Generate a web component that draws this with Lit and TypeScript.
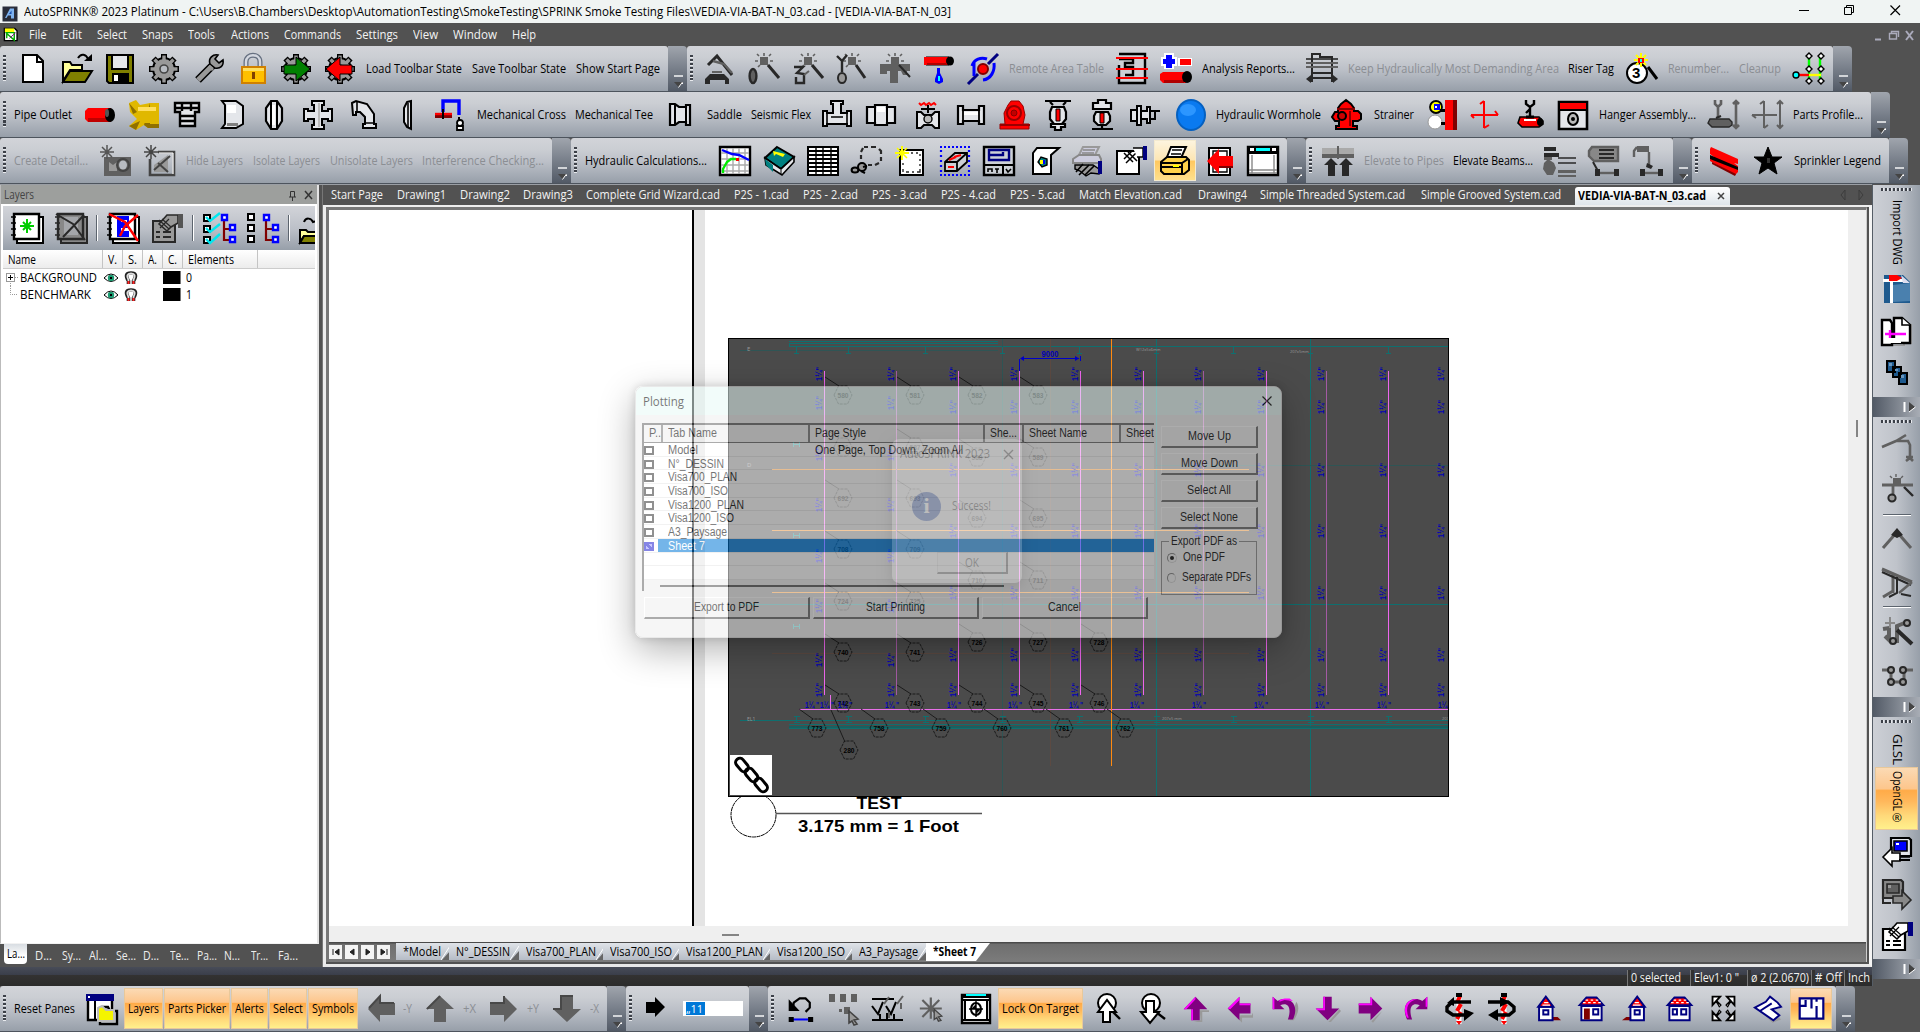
import { LitElement, html, svg, css } from "lit";
import { customElement } from "lit/decorators.js";

const COLORS: Record<string, string> = {
  n: "none", k: "#000", w: "#fff", g: "#808080", s: "#999", r: "#f00", b: "#00f",
  N: "#000080", m: "#800000", p: "#800080", M: "#f0f", y: "#ff0", o: "#808000",
  c: "#0ff", t: "#008080", G: "#008000", d: "#606060", D: "#282828", e: "#e4e6ea",
};
const col = (s: string) => COLORS[s] ?? s;

const GEAR = "n k 6 M16 1V31M1 16H31M5.5 5.5L26.5 26.5M26.5 5.5L5.5 26.5|s k 2 o 16 16 11 11|n s 3.4 M16 2.5V29.5M2.5 16H29.5M6.5 6.5L25.5 25.5M25.5 6.5L6.5 25.5|s n 0 o 16 16 9.6 9.6|#b8bcc2 #444 1.6 o 16 16 4 4";
const BURST = (x: number, y: number, c: string) => `n ${c} 1.5 M${x} ${y - 7}V${y + 7}M${x - 7} ${y}H${x + 7}M${x - 5} ${y - 5}L${x + 5} ${y + 5}M${x + 5} ${y - 5}L${x - 5} ${y + 5}`;
const SUN = "d n 0 M12 4H20V12H12Z|n d 1.6 M16 0V3M9 1L11 3M23 1L21 3M7 8H10M22 8H25M10 14L12 12M20 12L22 14";

// Each glyph is a list of "fill stroke width geometry" shapes on a 32-unit grid.
const ICONS: Record<string, string> = {
  new: "w k 2 M6 2H20L26 8V29H6Z|n k 2 M20 2V9H26",
  open: "#ff9 k 2 M2 9H9L11 12H21V17H9L2 28Z|o k 2 M9 18H31L24 29H2Z|n k 2 M17 5C20 0 25 1 27 6|k n 0 M23 8H31V1Z",
  save: "o k 2 M3 2H29V30H5L3 28Z|e k 2 M8 2H24V16H8Z|k n 0 M8 20H25V30H8Z|w n 0 M10 22H14V28H10Z",
  gear: GEAR,
  wrench: "n k 8 M5 27L20 12|n s 5 M5 27L20 12|s k 1.6 M17 11C15 5 20 1 25 2L22 6L26 10L30 7C31 13 27 16 22 15Z|s n 0 M17 12L21 16L19 18L15 14Z",
  lock: "n #667080 5 M9 16V9C9 0 23 0 23 9V16|n #d4d8e0 2.4 M9 16V9C9 0 23 0 23 9V16|#ffc000 #d08000 2 M5 14H28V30H5Z|#ffe060 n 0 M6 15H27V18H6Z|#804000 n 0 M15 19H18V26H15Z",
  gearG: GEAR + "|G k 1 M4 12H16V4L30 16L16 28V21H4Z",
  gearR: GEAR + "|r k 1 M28 12H16V4L2 16L16 28V21H28Z",
  arm: "n D 3 M4 12L13 3L28 22|n d 2.4 M9 8L20 11L28 20|D n 0 M1 31V26L6 21H20L25 26V31H21V27H6V31Z|d n 0 M8 20V18H18V20Z",
  wand1: SUN + "|n D 3 M20 12L31 25|d D 2.4 o 5 23 3.4 7",
  wand2: SUN + "|n D 3 M20 12L31 25|n D 2.4 M2 14H11L5 20L12 21V30H4V24|n d 2 M12 22L17 18",
  wand3: SUN + "|n D 3 M20 12L29 25|n D 2.4 M1 3L6 8V19M6 8L11 2|s D 2 o 6 25 4 5",
  wand4: SUN + "|d n 0 M1 11H31V18H28V22H24L22 18H19V30H11V18H8V21H1Z|n D 2 M20 12L31 24",
  pipedrop: "r k 1 M3 4H26V12H3Z|r n 0 M1 4H26V12H1Z|k n 0 o 27 8 4 4.5|#b00000 n 0 M4 10H24V12H4Z|b n 0 M14 15H17V20L20 26V29L16 31L12 29V26L14 20Z|c n 0 M15 23H17V28H15Z",
  nodeblue: "n N 3 M1 31L11 21M21 11L31 1|n b 3 M5 13C7 6 14 4 20 6M27 10C28 18 24 26 16 27M7 9V23|r m 2 o 16 16 5 5",
  sheet: "#ccd0d6 k 2.4 M3 1H29V30H3V12M3 6H17V10H9V14H17V22H9|n r 2 M0 5H32M0 16H32M0 25H32",
  analysis: "w n 0 M4 0H14V4H17V13H14V16H4V13H1V4H4Z|b n 0 M6 2H12V6H15V11H12V15H6V11H3V6H6Z|w n 0 M18 5H32V13H18Z|r n 0 M20 6H31V12H20Z|r n 0 M3 19H26V30H3L0 27V21Z|#b00000 n 0 M4 27H24V30H4Z|k n 0 o 27 24 5 6",
  frame: "n D 2 M6 29V1H14V4H26V29M6 20H26M3 25H29|n D 1.6 M0 6H32|n d 2 M0 10H32M0 14H32|D n 0 M0 26L5 22V30ZM32 26L27 22V30Z",
  tag3: "w k 2 o 11 20 10 10|k n 1 t 6 25 15 3|n k 3 M22 14L31 26|n y 2 M15 0V14M8 7H22M10 2L20 12M20 2L10 12|r n 0 M12 5H18V10H12Z|c n 0 M14 6H16V9H14Z",
  tree: "n #0f0 2.4 M16 4V26M27 4V26|n y 2.4 M16 22H28|n r 2.4 M4 22H16|c k 1.4 o 3 22 3 3|w k 1.4 M16 0L19 3L16 6L13 3ZM28 0L31 3L28 6L25 3ZM16 13L19 16L16 19L13 16ZM28 13L31 16L28 19L25 16ZM16 25L19 28L16 31L13 28ZM28 25L31 28L28 31L25 28Z",

  pipe: "r n 0 M4 9H27V23H4L1 20V12Z|#c00000 n 0 M4 19H27V23H4Z|k n 0 o 26 16 5 7|#555 n 0 o 23 14 2 4",
  brass: "#e0b800 n 0 M1 4L8 1L12 6L22 4H31V29H20L16 26L8 31L1 27L9 20L2 13Z|#907000 n 0 M22 4L16 26L20 29H31V25H22ZM1 4L9 13L5 15ZM1 27L12 22L8 31Z|#e0b800 n 0 M14 9H30V24H14Z|#ffdf60 n 0 M10 8H28V12H10Z",
  plug: "e k 2.4 M4 4H28V13H24V27H9V13H4Z|n k 2.4 M4 9H28M11 4V12M20 4V12M9 17H24M9 22H24",
  cap: "e k 2 M6 2H20L27 7V25L20 29H6L9 25V6Z|w n 0 M11 6H20V14H11Z|g n 0 M11 24H22V27H11Z",
  union: "e k 2.2 M13 2H19L24 9V22L19 30H13L8 22V9Z|n k 2 M13 3V29M19 3V29|w n 0 M14 6H17V26H14Z",
  cross: "e k 2 M10 2H22V6H20V12H26V10H30V22H26V20H20V26H22V30H10V26H12V20H6V22H2V10H6V12H12V6H10Z|n #bbb 2 M17 4V28",
  elbow: "e k 2 M5 4L9 2L20 5L27 15V25H29V29H16V25H18V18L13 13H9V16H6Z|n k 1.6 M10 3V13M17 24H27",
  cap2: "e k 2 M17 3L21 2V30L17 28L14 23V9Z|n k 1.6 M18 4V28",
  loop: "n b 3.4 M9 13V2H25V16|n m 4 M1 17H18|n r 2.4 M1 15H18|n k 2 M9 10V20M25 18V21|w k 1.8 o 26 24 3 3|w k 1.8 M23 27H29V31H23Z",
  reducer: "e k 2.2 M5 5H10L14 8H21V6H25V26H21V23H14L10 26H5Z|n k 2 M10 5V26M21 8V23",
  teeM: "e k 2 M10 2H22V5H20V14H26V12H30V27H26V25H6V27H2V12H6V14H12V5H10Z|n k 1.6 M6 14V25M26 14V25M10 18H22",
  coupling: "e k 2.2 M2 8H10V6H22V8H30V24H22V26H10V24H2Z|n k 2 M10 8V24M22 8V24|w n 0 M12 8H20V13H12Z",
  valve: "n r 2 M7 4L9 6L12 4L14 6L17 4L19 6L22 4L24 6|n k 2 M16 6V14|e k 2 M5 13H9L12 16H20L23 13H27V29H23L20 26H12L9 29H5Z|#bbb k 1.4 o 16 20 4 4|k n 0 M9 9H23V11H9Z",
  spool: "e k 2.2 M3 7H8V11H24V7H29V25H24V22H8V25H3Z|n k 1.8 M8 8V24M24 8V24|w n 0 M9 13H23V16H9Z",
  pump: "r #900 1 M9 6L12 2H20L24 7L26 16L24 25H30V30H1V25H6L5 14Z|n #900 2 o 15 14 7 7|#c00000 #800 1 o 15 14 3 3|n #900 2 M1 26H31",
  sprUp: "n k 2.2 M3 2H29M8 3L11 6M24 3L21 6|e k 2.2 M10 8H22L24 13V20L20 25H12L8 20V13Z|r k 1 M14 10H18V22H14Z|e k 2.2 M9 25H23V28H19V31H13V28H9Z",
  sprDn: "n k 2.2 M6 30H27M16 25V30|e k 2.2 M10 13H22L24 17V22L20 26H12L8 22V17Z|r k 1 M14 14H18V24H14Z|e k 2.2 M12 1H20V4H25V10H7V4H12Z",
  sprSide: "e k 2 M2 11H8V7H12V26H8V22H2Z|e k 2 M12 12H18V8H21V24H18V20H12Z|n k 2 M8 12V21M21 12H31M21 20H26V12",
  ball: "#0a7af0 #0560c0 2 o 16 16 14 15|#2c96ff n 0 o 13 11 8 6",
  hydrant: "r k 2 M11 5L16 1L21 5L24 9V12H28L31 15V20L28 22H23V27H27V30H6V27H9V22H5L2 18L5 13H8V9Z|n #800 2 M7 10H25M20 12V27|#c00 k 2 o 12 17 4 4",
  strainer: "r n 0 M18 1H26V31H18Z|m n 0 M26 1H30V31H26Z|y k 1.8 o 9 8 6 6|b n 0 M7 5H13V11H7Z|w n 0 M8 7H10V9H8Z|w s 1 o 8 23 7 7|k n 0 M13 10H18V13H13ZM14 23H18V26H14Z",
  redx: "n r 2 M16 2V29M3 16H30M16 2L12 5M16 29L21 26M3 16L6 19M30 16L27 12",
  hanger: "n k 2.4 M12 1V5L16 8L20 5V1M16 8V18M16 10L12 14|r k 1.6 M6 18H25L29 22V25L25 28H8L4 24Z|w n 0 M10 20H22V22H10Z|k n 0 o 26 23 3 4|n k 3 M12 18H20",
  seismic: "e k 2.6 M2 3H30V30H2Z|r n 0 M3 4H29V10H3Z|n k 2 M3 11H29|#bbb k 2 o 16 20 5 6|k n 0 o 16 20 2 2",
  hangerG: "n d 2.6 M8 1V5L11 8L14 5V1M11 8V19M29 2V29M26 5L29 2L32 5M26 26L29 29L32 26|d D 1.4 M3 20H22L25 23V26L22 28H5L1 24Z|n D 2 M9 19L14 17",
  crossG: "n d 2 M13 2V29M1 16H26M13 2L9 5M13 29L17 26M1 16L5 19M29 2V29M26 5L29 2L32 5M26 26L29 29L32 26",

  detail: "d n 0 M4 12H31V31H4Z|s n 0 M9 17L13 20L17 17V26H9Z|d #444 2 o 23 20 6 6|#b8bcc2 n 0 o 23 20 4 4.5|" + BURST(7, 7, "#555"),
  detail2: "n #444 2.6 M14 7H30V30H6V14|n w 1.2 M15 8H29M29 8V29|s n 0 M10 20L24 10V27H10Z|n #444 2 M10 25L26 11M14 18L24 27|n #444 1.2 M6 14V30H30|" + BURST(7, 7, "#444"),
  chart: "w k 2.4 M1 2H31V30H1Z|n #aaa 1.4 M2 8H30M2 14H30M2 20H30M2 26H30M8 3V29M14 3V29M20 3V29M26 3V29|n b 2.4 M3 5L13 9L20 10L30 15|n #0e0 2.4 M4 28V24L8 17L12 14H17|r n 0 M17 13H20V16H17Z",
  book: "t k 2 M14 2L31 12L18 24L2 13Z|e k 1.6 M2 13L18 24L31 12V17L19 30L3 20Z|t n 0 M2 14L10 20V27L3 20Z|y n 0 M10 6L22 9L20 12L13 9L11 11Z|n k 1 M18 25V29",
  table: "w k 2 M1 2H31V30H1Z|n k 2 M1 6H31M1 10H31M1 14H31M1 18H31M1 22H31M1 26H31|n k 1.4 M9 2V30M16 2V30M24 2V30",
  dashsel: "n D 2.2 M13 2H17M20 2H25M28 4L30 6V9M30 12V16M28 18L24 20M21 20H17M10 14V10M10 7L12 3|s k 2 o 11 22 4 4|s k 2 o 4 25 3.4 2.6|n k 2 M10 26L14 28|n k 2 M12 22L16 21",
  newpage: "w k 2 M6 5H29V30H6Z|n D 1.4 M12 8H14M17 8H19M22 8H24M26 9V11M26 14V16M26 19V21M26 24V27H23M20 27H18M15 27H12M9 27V24M9 20V18|" + BURST(8, 8, "#ff0") + "|n y 2 M1 8H15M8 1V15",
  pdfsel: "n b 2.2 M1 2H3M5 2H7M9 2H11M13 2H15M17 2H19M21 2H23M25 2H27M29 2H31M1 30H3M5 30H7M9 30H11M13 30H15M17 30H19M21 30H23M25 30H27M29 30H31M2 5V7M2 10V12M2 15V17M2 20V22M2 25V27M30 5V7M30 10V12M30 15V17M30 20V22M30 25V27|#ccd0d6 k 1.8 M6 17L16 8H28V17L18 26H6ZM6 17H18L28 8M18 17V26|n r 2 M10 15L17 12M15 12L22 10M9 22H15",
  panel: "#ccd0d6 k 2.4 M1 2H31V30H1Z|n N 2.4 M26 5V15H6V5ZM6 10H20V7|n k 2 M1 20H31M20 20V30|n k 1.6 M5 27V24H9V27M12 24H16M14 24V28M23 24L25 27L28 24",
  pageeye: "w k 2 M6 29V8L10 3H32L24 10V29Z|t k 1.4 M11 17L14 12L20 14V20L15 22Z|y n 0 M13 15H16V19H13Z|b n 0 M16 15H18V19H16Z",
  printhand: "#ccd s 2 M8 10L12 2H28L24 10|#ccd #888 2 M2 14L8 10H28L30 14V18H2Z|n #888 1.6 M12 5H24M11 8H23|s k 1.4 M4 20H22L28 24V29L20 28L15 31L9 26L4 24Z|n k 1.6 M5 27L12 19M8 30L18 20M14 30L23 21|N n 0 M27 16H31V29H27Z",
  props: "w k 2 M2 6H24V29H2Z|n k 1.5 M9 8L18 17M13 7L22 16M9 14L17 6M11 18L21 8|w k 1.4 M18 3H28V12H22|N n 0 M28 1H32V15H28Z",
  printer: "w k 2 M8 12L12 2H27L22 13|n k 1.6 M13 5H23M12 9H22|#ffd24a k 2 M2 17L8 12H27L30 15V25L25 29H5L2 26Z|n k 2 M2 18H23L29 14M23 18V28M3 22H23|y n 0 M14 20H20V22H14Z",
  pageR: "w k 2 M4 3H25V30H4Z|n k 1.4 M8 6H22V27H8Z|r n 0 M2 16L14 4V11H28V22H14V29Z|n m 2 M14 22H28",
  windowc: "w k 2.4 M1 2H31V30H1Z|k n 0 M1 2H31V9H1Z|c n 0 M9 3H23V6H9Z|w n 0 M3 3H7V6H3ZM25 3H29V6H25Z|n #888 1.4 M5 10V29M27 10V29M2 25H30M2 28H30",
  elevate: "#aaa n 0 M0 3H32V9H0Z|d n 0 M0 9H32V13H0ZM15 1H17V14H15Z|D n 0 M9 13L16 20H13V31H6V20H2ZM24 13L31 20H27V31H20V20H17Z",
  legend1: "D n 0 M0 2H12V6H0ZM0 8H15V12H0Z|d n 0 M0 12H8V15H0ZM0 18L4 14L10 18L12 23L9 30H3L-1 24ZM14 25H32V28H14ZM14 30H32V32H14Z|n D 1.6 M14 13H32M14 18H32",
  legend2: "#888 d 2.4 M4 2H30V16H6L1 11V6Z|n D 2 M11 5H26M11 9H26M11 13H26M5 17L10 26|n d 2.4 M8 28H30|D n 0 M7 24H12V31H7ZM26 24H31V31H26Z",
  legend3: "d n 0 M4 1H16V7H4Z|n d 2.4 M4 2L1 6V12M16 7V20|D n 0 M14 18L20 21L18 24L13 22Z|n d 2.4 M9 28H29|D n 0 M7 24H12V31H7ZM25 24H30V31H25Z",
  beam: "r n 0 M3 2L30 14V19L26 18L30 21V27L27 30L2 16V12L6 12L2 9V4Z|k n 0 M2 10L30 22V25L2 14Z|m n 0 M4 17L28 29L27 31L4 19Z",
  star: "k k 1 M16 2L20 12H30L22 18L25 29L16 23L7 29L10 18L2 12H12Z|#333 n 0 M15 13H18V18H15Z",

  panes: "w k 2.4 M2 5H26V27H2Z|N n 0 M0 1H28V8H0Z|w n 0 M2 3H4V5H2Z|n k 2 M9 8V27|#ccd0d6 k 2.4 M14 17L17 14H22L24 18H31V31H14Z|#f4f400 #bbb 2 M12 15L16 13L20 17H28V28H12Z",
  gL: "d n 0 M3 16L15 3V10H30V22H15V29Z|n #484848 2 M4 15L15 3V10H29", gU: "d n 0 M16 3L30 16H22V29H10V16H2Z|n #484848 2 M3 16L16 3", gR: "d n 0 M29 16L16 29V22H2V10H16V3Z|n #484848 2 M2 10H16V3", gD: "d n 0 M16 29L2 16H10V3H22V16H30Z|n #484848 2 M2 16H10V3H22",
  kR: "k n 0 M7 9H16V4L26 14L16 24V20H7Z",
  undoB: "n k 2.6 M7 17L8 9L15 4H22L27 9V15L22 20|k n 0 M2 5V19H15Z|n b 2.4 M7 29H25|k n 0 M2 26H8V32H2ZM25 26H31V32H25Z",
  selG: "d n 0 M0 1H6V9H0ZM11 1H17V9H11ZM22 1H28V9H22ZM15 14H21V21H15ZM10 16H13V19H10Z|s #444 1.6 M20 18L29 26L25 27L28 31L25 32L23 28L20 30Z",
  checks: "n k 2 M0 6H22M0 27H31M0 13L6 21L11 9M14 13L19 21L24 9M8 21V27M15 20V27M22 21V27|n d 2 M12 11L17 4M25 11L31 3M17 19V25M29 10V16",
  burstG: "n d 2.6 M14 3V28M1 16H27M4 6L24 26M24 6L4 26|s #444 1.6 M18 17L27 25L23 26L26 30L23 31L21 27L18 29Z",
  target: "w k 2.4 M2 2H30V30H2Z|k n 0 M1 1H31V5H1Z|c n 0 M6 1H26V3H6Z|n k 2 M2 7H30M5 7V26M27 7V26M2 27H30|w k 2 o 16 16 5 6|k n 0 M16 11V16H11ZM16 16H21L16 21Z|n k 1.4 M16 8V24M9 16H23",
  zoomU: "n k 2.4 M20 19L27 26|w k 2 o 14 10 9 9|w k 2 M10 29V19H5L14 7L23 19H17V29Z", zoomD: "n k 2.4 M20 19L29 26|w k 2 o 15 10 9 9|w k 2 M10 8H18V19H23L14 30L5 19H10Z",
  pU: "s n 0 M21 18H32V20H24V32H14L22 30Z|p n 0 M16 2L30 17H21V30H11V17H2Z|M n 0 M16 2L2 17H5L16 5ZM11 17H13V30H11Z", pL: "s n 0 M17 24H31V22H32V27H19V33L16 30Z|p n 0 M2 16L16 2V10H29V22H16V30Z|M n 0 M2 16L16 2V6L5 17ZM16 10H29V12H16Z",
  pD: "s n 0 M30 17L17 32L20 32L32 19Z|p n 0 M16 30L2 16H11V2H21V16H30Z|M n 0 M2 16H11V2H13V18H4Z", pR: "s n 0 M17 31L30 19L19 33Z|p n 0 M30 16L16 30V22H2V10H16V2Z|M n 0 M2 10H16V2L18 4V12H2Z",
  pUn: "s n 0 M22 30H27C34 20 33 12 30 8Z|p n 0 M2 2V17H16L11 12C20 8 25 15 20 29L26 29C35 10 20 0 8 7Z|M n 0 M2 2V17H4V4ZM10 6L16 4H22L26 7L16 6L10 8Z", pRe: "p n 0 M30 2V17H16L21 12C12 8 7 15 12 29L6 29C-3 10 12 0 24 7Z|M n 0 M28 4L30 2V14H28ZM6 27C-1 12 8 4 18 5C8 7 3 14 8 27Z",
  orbL: "n w 5 M16 2V31|n r 4 M17 3L14 10M18 11L14 18M18 19L14 26|k n 0 M13 0H19V4H13Z|n k 3.4 M28 9H9L4 14V18L10 22H24|k n 0 M11 4V13L4 10ZM21 16L31 20L21 28Z|r n 0 M13 28H19L16 32Z",
  orbR: "n w 5 M18 2V31|n r 4 M19 3L16 10M20 11L16 18M20 19L16 26|k n 0 M15 0H21V4H15Z|n k 3.4 M2 9H22L28 14V18L23 22H8|k n 0 M14 4L24 9L14 14ZM12 16L2 22L12 28Z|r n 0 M15 28H21L18 32Z",
  houseL: "m n 0 M20 26H28L32 30H20Z|w N 2.3 M6 14H22V30H6Z|r N 2.3 M14 2L23 14H5Z|n w 1.4 M12 9H17M10 12H19|n N 2.3 M11 18H17V23H11Z",
  houseF: "w N 2.3 M4 13H28V30H4Z|r N 2.3 M10 3H22L30 12H2Z|n w 1.6 M9 6H12M15 6H18M21 6H24M6 9H9M12 9H15M18 9H21M24 9H27|m n 0 M7 16H14V29H7Z|n N 2.3 M18 17H24V23H18Z",
  houseR: "m n 0 M10 26H5L0 30H12Z|w N 2.3 M10 14H26V30H10Z|r N 2.3 M18 2L27 14H9Z|n w 1.4 M15 9H20M13 12H22|n N 2.3 M15 18H21V23H15Z",
  houseB: "w N 2.3 M4 13H28V30H4Z|r N 2.3 M10 3H22L30 12H2Z|n w 1.6 M9 6H12M15 6H18M21 6H24M6 9H9M12 9H15M18 9H21M24 9H27|n N 2.3 M8 17H13V23H8ZM18 17H24V23H18Z",
  expand: "n k 3 M5 5L12 12M27 5L20 12M5 27L12 20M27 27L20 20|w k 2.2 M3 2H12L3 12ZM29 2H20L29 12ZM3 30H12L3 20ZM29 30H20L29 20Z|w k 1.4 M8 8L13 12L11 14ZM24 8L19 12L21 14ZM8 24L13 20L11 18ZM24 24L19 20L21 18Z",
  iso: "s n 0 M6 18L22 33L32 29L30 27Z|w N 2.3 M1 15L14 8L19 2L28 9L32 14L21 17L30 24L23 30Z|n N 2.3 M7 19L21 10",
  plan: "w N 2.6 M2 4H30V28H2Z|n N 2.6 M2 13H9V6M16 4V16M22 13V28M22 4V8",

  dwg: "#1f5a8e n 0 M3 2H22L29 9V30H3Z|#4a80ae n 0 M12 12L29 10V28L12 29Z|w n 0 M2 6H24V9H2ZM9 3H12V30H9Z|r n 0 M8 2H16L21 5L16 8H8Z|#dde n 0 M20 2L29 10H22Z",
  pages: "s n 0 M5 30H24V28H31V8H29V27H22V29H5Z|w k 2.4 M1 4H9L11 7V29H1Z|w k 2.4 M13 2H21L29 9V27H13Z|w k 1.6 M21 2V9H29|n M 2.4 M4 18H25M9 14V22|w n 0 M6 22H20V27H6Z",
  blocks: "#1f5a8e k 2 M6 4H14V15H6ZM12 10H20V20H12ZM18 16H26V27H18Z|#6a96bd n 0 M8 6H11V9H8ZM14 12H17V14H14ZM20 18H23V21H20Z",
  armS: "n d 2.6 M1 14L15 8L25 2M15 8H27L29 12V27M25 24H32M25 28L29 25L32 28",
  sunS: "d n 0 M12 4H20V12H12Z|n d 1.4 M15 0V3M9 2L11 4M22 2L20 4|n d 2.8 M1 11H32M12 12V24|n D 2.4 M23 13L32 22|s D 2 o 11 24 3.6 3.4",
  vS: "n d 3 M2 25L16 9L30 25|D n 0 M16 5L22 12L16 15L10 12Z",
  aS: "n d 3 M1 2L31 15M12 8V26M2 30L12 24|n D 2 M1 5L30 18M16 10V26L8 30M20 27L30 29|n d 2.4 M31 15L18 26",
  wandS: "n d 4 M2 13L8 12V24L4 20M8 25H16V10L26 6|s D 2 o 26 7 3 3|s D 2 o 12 25 3 3|n D 4 M16 14L31 28|n #888 2 M9 1V12M4 7H14",
  nodesS: "n d 3 M1 10H12M20 10H32M10 10V24M23 10V24M10 22H23|s D 2 o 10 10 3 3|s D 2 o 22 10 3 3|s D 2 o 10 22 3 3|s D 2 o 22 22 3 3",
  monL: "e k 2.2 M10 2H28L30 4V20H10Z|b k 1.6 M13 5H26V15H13Z|w n 0 M15 7H18V9H15Z|w k 1.6 M2 21L11 12V17H19V25H11V30ZM19 21H29|n k 2 M18 24H29",
  monR: "#888 D 2.2 M2 2H20L22 4V20H2Z|d D 1.6 M6 6H18V15H6Z|s n 0 M7 7H10V10H7Z|#888 D 1.6 M12 18H21V13L30 22L21 31V25H12Z|n D 2 M2 20V25H10",
  handprops: "w k 2.2 M2 9H24V30H2Z|n k 1.8 M5 21H9M12 21H20M5 25H9M12 25H20|w k 1.6 M8 12L16 3H27V11L20 15L16 19Z|n k 1.2 M8 8L18 17M11 7L20 15M9 16L18 7|N n 0 M27 2H32V16H27Z",

  lNew: "w k 2 M6 5H32V31H6Z|w k 2.4 M3 2H28V27H3Z|n k 1.5 M0 5H5M0 11H5M0 17H5M0 23H5|n #0c0 2 M16 7V21M9 14H23M12 10L20 18M20 10L12 18",
  lDel: "#888 D 2 M6 5H32V31H6Z|#888 D 2.4 M3 2H28V27H3Z|n D 1.5 M0 5H5M0 11H5M0 17H5M0 23H5|#a4a6aa n 0 M9 5H23V23H9Z|n D 2 M1 2L18 12L30 28M8 25L29 3",
  lDelB: "w k 2 M6 5H32V31H6Z|w k 2.4 M3 2H28V27H3Z|n k 1.5 M0 5H5M0 11H5M0 17H5M0 23H5|b n 0 M10 4H22V25H10Z|w n 0 M14 8H20V10H14ZM14 16H22V19H14Z|n r 2.4 M2 2L18 10L31 29M31 3L18 14L13 24",
  lProp: "s D 2 M2 9H24V30H2Z|n D 1.8 M5 20H9M12 20H20M5 25H9M12 25H20|s D 1.6 M8 12L16 3H27V11L20 15L16 19Z|n D 1.2 M8 8L18 17M11 7L20 15M9 16L18 7|#555 n 0 M27 2H32V16H27Z",
  lTreeC: "w k 2 M1 3H7V9H1ZM1 14H7V20H1ZM1 25H7V31H1Z|n #00e8f0 2.4 M3 5L7 9L17 1M3 16L7 20L17 12M3 27L7 31L17 22|n m 2.2 M21 8V28H28M21 17H28|w b 2.4 M19 3H24V8H19ZM27 13H32V18H27ZM27 25H32V30H27Z",
  lBox: "w k 2 M13 2H19V8H13ZM13 13H19V19H13ZM13 24H19V30H13Z",
  lTree: "n m 2.2 M10 8V28H17M10 17H17|w b 2.4 M8 3H13V8H8ZM17 13H22V18H17ZM17 25H22V30H17Z",
  lOpen: "n k 2 M6 10C8 5 13 6 15 10L19 9|#ff9 k 2 M2 18H8L10 20H18V24H6L2 30Z|o k 2 M6 24H20V31H2Z",
  app: "#2a2e3a n 0 M1 1H31V31H1Z|#7fb4f0 n 0 M6 24L16 5H24V25H18V19H12L9 24Z|#1a50b0 n 0 M14 16L19 9V16Z",
  doc: "w k 3 M3 3H25L30 8V29H3Z|y n 0 M4 3H24V11H4Z|n #0a0 3 M5 12H24V28L8 14V24|n p 2 M14 24L27 12",
};
const COMPACT = new Set(["pU", "pL", "pD", "pR", "pUn", "pRe", "houseL", "houseF", "houseR", "houseB", "expand", "iso", "plan", "undoB", "burstG"]);

function shape(s: string) {
  const [f, st, w, ...rest] = s.trim().split(/\s+/);
  if (!rest.length) return "";
  if (rest[0] === "o") return svg`<ellipse cx=${rest[1]} cy=${rest[2]} rx=${rest[3]} ry=${rest[4]} fill=${col(f)} stroke=${col(st)} stroke-width=${w}></ellipse>`;
  if (rest[0] === "t") return svg`<text x=${rest[1]} y=${rest[2]} font-size=${rest[3]} font-weight="700" fill=${col(f)}>${rest[4]}</text>`;
  return svg`<path d=${rest.join(" ")} fill=${col(f)} stroke=${col(st)} stroke-width=${w}></path>`;
}
const icon = (name: string, size = COMPACT.has(name) ? 27 : 32) =>
  html`<svg class="ic" width=${size} height=${size} viewBox="0 0 32 32">${(ICONS[name] ?? "").split("|").map(shape)}</svg>`;

const fit = (text: string, w: number, cls = "") =>
  html`<span class="fit ${cls}" style="width:${w}px"><span class="fi" data-w=${w}>${text}</span></span>`;

type Item = [string, number, number?, string?];
interface Bar { x: number; end: number; items: Item[]; }

const BARS: Bar[][] = [
  [
    { x: 0, end: 668, items: [["new", 33], ["open", 77], ["save", 120], ["gear", 164], ["wrench", 209], ["lock", 253], ["gearG", 296], ["gearR", 340], ["Load Toolbar State", 366, 462], ["Save Toolbar State", 472, 566], ["Show Start Page", 576, 660]] },
    { x: 687, end: 1833, items: [["arm", 720], ["wand1", 764], ["wand2", 808], ["wand3", 852], ["wand4", 895], ["pipedrop", 939], ["nodeblue", 983], ["Remote Area Table", 1009, 1104, "off"], ["sheet", 1132], ["analysis", 1176], ["Analysis Reports...", 1202, 1295], ["frame", 1322], ["Keep Hydraulically Most Demanding Area", 1348, 1559, "off"], ["Riser Tag", 1568, 1614], ["tag3", 1642], ["Renumber...", 1668, 1729, "off"], ["Cleanup", 1739, 1781, "off"], ["tree", 1809]] },
  ],
  [
    { x: 0, end: 1871, items: [["Pipe Outlet", 14, 72], ["pipe", 100], ["brass", 144], ["plug", 187], ["cap", 232], ["union", 274], ["cross", 318], ["elbow", 363], ["cap2", 406], ["loop", 450], ["Mechanical Cross", 477, 566], ["Mechanical Tee", 575, 653], ["reducer", 681], ["Saddle", 707, 742], ["Seismic Flex", 751, 811], ["teeM", 837], ["coupling", 881], ["valve", 928], ["spool", 971], ["pump", 1015], ["sprUp", 1058], ["sprDn", 1102], ["sprSide", 1145], ["ball", 1191], ["Hydraulic Wormhole", 1216, 1321], ["hydrant", 1346], ["Strainer", 1374, 1414], ["strainer", 1443], ["redx", 1484], ["hanger", 1530], ["seismic", 1573], ["Hanger Assembly...", 1599, 1696], ["hangerG", 1723], ["crossG", 1767], ["Parts Profile...", 1793, 1863]] },
  ],
  [
    { x: 0, end: 552, items: [["Create Detail...", 14, 88, "off"], ["detail", 116], ["detail2", 160], ["Hide Layers", 186, 243, "off"], ["Isolate Layers", 253, 320, "off"], ["Unisolate Layers", 330, 413, "off"], ["Interference Checking...", 422, 544, "off"]] },
    { x: 571, end: 1287, items: [["Hydraulic Calculations...", 585, 707], ["chart", 735], ["book", 779], ["table", 823], ["dashsel", 867], ["newpage", 910], ["pdfsel", 955], ["panel", 999], ["pageeye", 1043], ["printhand", 1087], ["props", 1131], ["printer", 1175, undefined, "hot"], ["pageR", 1221], ["windowc", 1263]] },
    { x: 1307, end: 1674, items: [["elevate", 1339], ["Elevate to Pipes", 1365, 1445, "off"], ["Elevate Beams...", 1454, 1534], ["legend1", 1561], ["legend2", 1605], ["legend3", 1650]] },
    { x: 1693, end: 1890, items: [["beam", 1725], ["star", 1769], ["Sprinkler Legend", 1795, 1882]] },
  ],
];
const BOTTOM: Bar[] = [
  { x: 0, end: 607, items: [["Reset Panes", 14, 75], ["panes", 102], ["Layers", 128, 159, "on"], ["Parts Picker", 168, 226, "on"], ["Alerts", 235, 264, "on"], ["Select", 273, 303, "on"], ["Symbols", 312, 354, "on"], ["gL", 381], ["-Y", 403, 412, "off"], ["gU", 440], ["+X", 463, 476, "off"], ["gR", 504], ["+Y", 527, 539, "off"], ["gD", 567], ["-X", 590, 599, "off"]] },
  { x: 627, end: 750, items: [["kR", 656], ["#input", 684, 744]] },
  { x: 769, end: 1837, items: [["undoB", 801], ["selG", 846], ["checks", 889], ["burstG", 933], ["target", 977], ["Lock On Target", 1003, 1080, "on"], ["zoomU", 1110], ["zoomD", 1153], ["pU", 1196], ["pL", 1240], ["pUn", 1285], ["pD", 1328], ["pR", 1371], ["pRe", 1416], ["orbL", 1460], ["orbR", 1503], ["houseL", 1548], ["houseF", 1592], ["houseR", 1636], ["houseB", 1680], ["expand", 1724], ["iso", 1768], ["plan", 1812, undefined, "sel"]] },
];

const DOC_TABS: [string, number, number][] = [
  ["Start Page", 331, 383], ["Drawing1", 397, 446], ["Drawing2", 460, 510], ["Drawing3", 523, 573], ["Complete Grid Wizard.cad", 586, 720], ["P2S - 1.cad", 734, 789], ["P2S - 2.cad", 803, 858], ["P2S - 3.cad", 872, 927], ["P2S - 4.cad", 941, 996], ["P2S - 5.cad", 1010, 1065], ["Match Elevation.cad", 1079, 1182], ["Drawing4", 1198, 1247], ["Simple Threaded System.cad", 1260, 1405], ["Simple Grooved System.cad", 1421, 1561],
];
const SHEET_TABS: [string, number, number][] = [
  ["*Model", 404, 442], ["N°_DESSIN", 457, 511], ["Visa700_PLAN", 527, 597], ["Visa700_ISO", 611, 673], ["Visa1200_PLAN", 687, 764], ["Visa1200_ISO", 778, 846], ["A3_Paysage", 860, 919],
];
const MENU: [string, number, number][] = [["File", 29, 46.5], ["Edit", 62, 82], ["Select", 97, 127], ["Snaps", 142, 173], ["Tools", 188, 215], ["Actions", 231, 269], ["Commands", 284, 341], ["Settings", 356, 398], ["View", 413, 438], ["Window", 453, 497], ["Help", 512, 536]];

/** Lays labels in a row so that each keeps its own start and width. */
function run(list: [string, number, number][], from: number, cls = "") {
  let at = from;
  return list.map(([s, a, b]) => {
    const gap = a - at;
    at = b;
    return html`<span class="lab ${cls}" style="margin-left:${gap}px">${fit(s, b - a)}</span>`;
  });
}

const COLS = [824, 896, 958, 1019, 1080, 1143, 1203, 1266, 1326, 1388, 1446];
const HEX: [number, number, number][] = [
  [580, 843, 395], [581, 915, 395], [582, 977, 395], [583, 1038, 395], [586, 843, 447], [587, 915, 447], [588, 977, 457], [589, 1038, 457],
  [692, 843, 498], [693, 915, 498], [694, 977, 518], [695, 1038, 518], [708, 843, 549], [709, 915, 549], [710, 977, 580], [711, 1038, 580],
  [724, 843, 601], [725, 915, 601], [740, 843, 652], [741, 915, 652], [726, 977, 642], [727, 1038, 642], [728, 1099, 642],
  [742, 843, 703], [743, 915, 703], [744, 977, 703], [745, 1038, 703], [746, 1099, 703],
  [773, 817, 728], [758, 879, 728], [759, 941, 728], [760, 1002, 728], [761, 1064, 728], [762, 1125, 728],
];

const drawing = () => {
  const isDim = (i: number) => i === 1 || i === 6 || i === 8;
  const rowsA = [374, 403, 454, 505, 556, 606, 660, 690];
  const rowsB = [374, 407, 470, 531, 593, 655, 690];
  const hex = (n: number, x: number, y: number) => svg`
    <path d="M${x - 9} ${y}L${x - 4.5} ${y - 9}H${x + 4.5}L${x + 9} ${y}L${x + 4.5} ${y + 9}H${x - 4.5}Z" fill="none" stroke="#141414" stroke-width=".9" stroke-dasharray="3 1"></path>
    <text x=${x} y=${y + 3} class="hx" textLength="11" lengthAdjust="spacingAndGlyphs">${n}</text>`;
  return html`<svg class="drawing" width="1519" height="716" viewBox="329 210 1519 716">
    <rect x="692" y="210" width="2" height="716" fill="#000"></rect>
    <rect x="694" y="210" width="11" height="716" fill="#e4e4e4"></rect>
    <ellipse cx="753.5" cy="815" rx="22.5" ry="22" fill="#fff" stroke="#000" stroke-dasharray="4 .6"></ellipse>
    <rect x="728.5" y="338.500" width="720" height="458" fill="#4b4b4b" stroke="#000"></rect>
    <svg x="729" y="339" width="719" height="457" viewBox="729 339 719 457">
      <g stroke="#0f6f6f" fill="none" shape-rendering="crispEdges">
        <path d="M789 341.500H998M789 343.500H998M789 344V346M789 346.500H1448M789 720.500H1448M1156.500 339V796"></path>
        <path d="M1310.500 339V796M740 604.500H1448M740 720.500H790M789 724.500H1448M789 728.500H1448"></path>
        <path d="M789 726.500H1448" stroke="#186060" stroke-width="2"></path>
        <path d="M740 350.500H998M1002.500 339V796M1156 465.500H1448" stroke="#2f5555"></path>
        ${[796, 848, 925, 1002, 1079, 1156, 1233, 1310, 1388].map((x) => svg`<path d="M${x + .5} 347V353M${x - 2} 353.500H${x + 3}M${x + .5} 717V723M${x - 2} 716.500H${x + 4}M${x - 2} 722.500H${x + 4}"></path>`)}
        ${[444, 535, 626].map((y) => svg`<path d="M793 ${y + .5}H800M793.500 ${y - 2}V${y + 3}M799.500 ${y - 2}V${y + 3}" stroke="#1c8a8a"></path>`)}
      </g>
      <g fill="none" shape-rendering="crispEdges">
        <path d="M1050.500 339V766M772 653.500H1249" stroke="#5c4a42"></path>
        <path d="M772 469.500H1249M772 530.500H1249M772 592.500H1249" stroke="#e58a2c"></path>
        <path d="M799 709.500H1448M830.500 695V709" stroke="#e870e8"></path>
        ${COLS.slice(0, 10).map((x, i) => svg`<path d="M${x + .5} 371V695" stroke=${isDim(i) ? "#a35aa3" : "#ee66ee"}></path>`)}
        <path d="M1111.500 339V766" stroke="#ff8a10"></path>
        <path d="M1019.500 371V359M1021 358.500H1079M1080.500 356V361" stroke="#0000c8"></path>
      </g>
      <g stroke="#161616" stroke-width=".9" fill="none">
        ${HEX.filter(([n]) => n < 750).map(([, x, y]) => svg`<path d="M${x - 18} ${y - 18}L${x - 4} ${y - 9}"></path>`)}
        ${[817, 879, 941, 1002, 1064, 1125].map((x) => svg`<path d="M${x - 18} 709L${x - 4} 719"></path>`)}
        <path d="M831 710L845 742"></path>
      </g>
      ${HEX.map(([n, x, y]) => hex(n, x, y))}${hex(280, 849, 750)}
      <path d="M1020 358.500L1024 356V361ZM1079 358.500L1075 356V361Z" fill="#0000c8"></path>
      <text x="1050" y="357" class="dim" text-anchor="middle" textLength="17" lengthAdjust="spacingAndGlyphs">9000</text>
      ${COLS.map((x, i) => (i < 2 ? rowsA : rowsB).map((y) => svg`<text class="dim" text-anchor="middle" textLength="14" lengthAdjust="spacingAndGlyphs" transform="translate(${x - 2} ${y}) rotate(-90)">1¼"</text>`))}
      ${[812, 827, 845, 892, 954, 1015, 1076, 1137, 1199, 1261, 1322, 1384, 1445].map((x) => svg`<text class="dim" text-anchor="middle" x=${x} y="708" textLength="14" lengthAdjust="spacingAndGlyphs">1¼ "</text>`)}
      <g fill="#999" font-size="4">
        <text x="747" y="351" font-size="6">E</text><text x="747" y="467" font-size="6">D</text>
        <text x="1136" y="351">W12x5x6mm</text><text x="1290" y="353">207x5mm</text><text x="1162" y="720">207x5 mm</text><text x="1442" y="720">207</text><text x="747" y="721" font-size="5">EL1</text>
      </g>
    </svg>
    <rect x="730" y="755" width="42" height="40" fill="#fff"></rect>
    <g fill="none" stroke="#000" stroke-width="3">
      <rect x="-7.500" y="-4.200" width="15" height="8.400" rx="4" transform="translate(742 765) rotate(50)"></rect>
      <rect x="-7.500" y="-4.200" width="15" height="8.400" rx="4" transform="translate(751.500 775) rotate(50)"></rect>
      <rect x="-7.500" y="-4.200" width="15" height="8.400" rx="4" transform="translate(761 785) rotate(50)"></rect>
    </g>
    <text x="879" y="809" class="cap" text-anchor="middle" textLength="45" lengthAdjust="spacingAndGlyphs">TEST</text>
    <text x="798" y="831.500" class="cap" textLength="161" lengthAdjust="spacingAndGlyphs">3.175 mm = 1 Foot</text>
    <path d="M729 796.500H1449" stroke="#000"></path>
    <path d="M776 813.500H982" stroke="#555" stroke-width="1.500"></path>
  </svg>`;
};

@customElement("app-root")
export class AppRoot extends LitElement {
  static styles = css`
    :host { display: block; width: 1920px; height: 1032px; overflow: hidden; background: #525252; font: 12px/16px "Open Sans", "Noto Sans", sans-serif; color: #000; }
    * { box-sizing: border-box; }
    .ic { display: block; flex: none; overflow: visible; }
    .ic text { font-family: "Liberation Sans", sans-serif; }
    .fit { display: inline-flex; justify-content: flex-start; white-space: pre; flex: none; }
    .fi { display: inline-block; transform-origin: 0 50%; flex: none; }
    .fit.vert { writing-mode: vertical-rl; display: flex; }
    .title { display: flex; height: 23px; background: #f0f4f3; align-items: center; padding-left: 2px; }
    .title .ic { margin-right: 6px; margin-top: 4px; }
    .title .t { margin-top: 1px; flex: 1; }
    .title .wins { display: flex; width: 124px; height: 23px; margin-right: 5px; }
    .menu { display: flex; height: 23px; align-items: center; color: #f4f4f4; padding-left: 3px; }
    .menu .mdi { margin-left: auto; display: block; margin-right: 4px; }
    .trow { display: flex; height: 46px; }
    .bar { display: flex; align-items: center; height: 45px; flex: none; background: linear-gradient(#d2d4d9 0, #cbced3 25%, #bcc0c8 52%, #979fa9 100%); border-radius: 3px 3px 0 0; box-shadow: 0 1px #4d545d; }
    .grip { width: 3px; height: 27px; margin-left: 3px; background: repeating-linear-gradient(#3c4048 0 2px, #e8eaee 2px 3px, transparent 3px 3.900px); flex: none; }
    .more { width: 19px; height: 45px; flex: none; background: linear-gradient(#a0a5ad, #787f8a 50%, #525a66); border-radius: 0 4px 0 0; box-shadow: 0 1px #4d545d; display: flex; flex-direction: column; justify-content: flex-end; align-items: center; padding-bottom: 2px; }
    .cell { display: flex; align-items: center; justify-content: center; height: 41px; flex: none; }
    .off { color: #8b8e93; }
    .on, .sel { border: 1px solid #e8c89a; background: linear-gradient(#fbdab4 0, #fdc68c 34%, #ffab48 37%, #ffb85c 55%, #ffd97a 78%, #fff08c 100%); }
    .hot { border: 1px solid #f4ead0; background: linear-gradient(#fdf4de 0, #fde6b4 48%, #ffc860 52%, #ffe08c 100%); }
    .input { width: 60px; height: 15px; background: #fff; display: flex; align-items: center; padding-left: 3px; }
    .input span { background: #0078d7; color: #fff; height: 13px; line-height: 13px; width: 19px; font-size: 11px; }
    .mid { display: flex; height: 802px; }
    .left { width: 1872px; display: flex; flex-direction: column; }
    .work { display: flex; height: 783px; border-top: 1px solid #9a9ea4; }
    .layers { width: 320px; display: flex; flex-direction: column; }
    .pane { height: 759px; border: 1px solid #f2f2f2; border-top: 0; border-right: 2px solid #e4e4e4; border-left: 1px solid #bbb; background: #fff; width: 319px; }
    .phead { height: 19px; background: #9d9f9d; color: #444; display: flex; align-items: center; padding-left: 3px; }
    .ptool { display: flex; height: 44px; margin: 2px 2px 0; background: linear-gradient(#d2d4d9, #bcc0c8 52%, #979fa9); align-items: center; overflow: hidden; }
    .sepv { width: 2px; height: 26px; background: linear-gradient(90deg, #5c646e 50%, #fff 50%); flex: none; }
    .lhead { display: flex; height: 19px; background: linear-gradient(#fff, #ececec); border-bottom: 1px solid #ccc; margin: 0 2px; }
    .lhead div { border-right: 1px solid #c4c4c4; padding-left: 5px; line-height: 20px; }
    .lrow { display: flex; height: 17px; align-items: center; padding-left: 5px; }
    .ptabs { display: flex; height: 23px; align-items: center; color: #eee; }
    .la { background: linear-gradient(#d8dde2, #fff 60%); border-radius: 0 0 4px 4px; height: 20px; margin-top: -4px; width: 23px; color: #000; margin-left: 4px; display: flex; align-items: center; justify-content: center; }
    .docs { width: 1550px; margin-left: 2px; display: flex; flex-direction: column; border-left: 1px solid #777; }
    .dtabs { height: 20px; display: flex; align-items: center; color: #f2f2f2; padding-left: 7px; }
    .dact { margin-left: 14px; width: 155px; height: 18px; background: linear-gradient(#fff, #dfe5ea); border-radius: 3px 3px 0 0; color: #000; font-weight: 700; display: flex; align-items: center; padding-left: 3px; align-self: flex-end; }
    .dact svg { margin-left: 11px; }
    .dframe { flex: 1; border: 2px solid #eee; border-left: 3px solid #ececec; border-bottom: 3px solid #e8e8e8; border-right: 3px solid #f4f4f4; padding: 0 2px 2px 0; }
    .dinner { height: 100%; border: 3px solid #777; border-bottom: 0; border-right: 1px solid #ccc; background: #efefef; display: flex; flex-direction: column; }
    .canvas { position: relative; height: 716px; width: 1519px; background: #fff; overflow: hidden; }
    .crow { display: flex; height: 716px; }
    .vs { flex: 1; display: flex; justify-content: center; padding-top: 210px; }
    .vs i { width: 2px; height: 17px; background: #848484; }
    .hs { height: 16px; padding: 8px 0 0 393px; }
    .hs i { display: block; width: 17px; height: 2px; background: #848484; }
    .sheets { flex: 1; background: linear-gradient(#4a4a4a 0 1px, #6e6e6e 2px, #7c7c7c); display: flex; align-items: flex-start; padding-top: 1px; }
    .nav { width: 13px; height: 14px; background: #f4f4f4; margin: 2px 3px 0 0; display: grid; place-items: center; flex: none; }
    .stab { height: 17px; background: linear-gradient(#dfe3e8, #b6bcc6); display: flex; align-items: center; flex: none; padding-left: 7px; }
    .cut { width: 9px; height: 17px; margin-left: auto; display: block; flex: none; }
    .sact { background: #fff; font-weight: 700; height: 18px; clip-path: polygon(0 0, 100% 0, calc(100% - 14px) 100%, 0 100%); }
    .status { height: 19px; background: linear-gradient(#484c58 0, #3a3e4a 8px, #333231 8px, #2b2b2b); color: #f2f2f2; display: flex; padding-top: 3px; }
    .status .lab { box-shadow: -3px 0 #333231, -4px 0 #777; }
    .side { width: 48px; padding-top: 1px; border-left: 1px solid #555d66; }
    .vbar { display: flex; flex-direction: column; align-items: center; background: linear-gradient(90deg, #cdd0d6, #bfc3ca 50%, #979fa9); width: 47px; }
    .vgrip { width: 31px; height: 3px; margin-top: 3px; background: repeating-linear-gradient(90deg, #3c4048 0 2px, #e8eaee 2px 3px, transparent 3px 4px); flex: none; }
    .vmore { height: 20px; background: linear-gradient(90deg, #525a66, #a8adb5); display: flex; justify-content: flex-end; align-items: center; padding-right: 3px; }
    .sp { flex: none; }
    .hl { width: 28px; height: 2px; background: linear-gradient(#5c646e 50%, #fff 50%); }
    .ogl { width: 43px; height: 63px; display: grid; place-items: center; flex: none; }
    .brow { display: flex; height: 46px; }
    .drawing { display: block; }
    .dim { font: 700 8.500px "Liberation Sans", sans-serif; fill: #0202b4; }
    .hx { font: 700 8px "Liberation Sans", sans-serif; fill: #000; text-anchor: middle; }
    .cap { font: 700 17px "Liberation Sans", sans-serif; fill: #000; }
    .dlg { position: absolute; left: 306px; top: 176px; width: 647px; height: 252px; border-radius: 8px; background: #f0f0f0; opacity: .54; overflow: hidden; font: 12px/13px "Liberation Sans", sans-serif; border: 1px solid #d8d8d8; }
    .shadow { position: absolute; left: 306px; top: 176px; width: 647px; height: 252px; border-radius: 8px; box-shadow: 0 12px 36px rgba(0,0,0,.3), 0 0 8px rgba(0,0,0,.14); clip-path: path(evenodd, "M-80 -80H740V360H-80ZM8 0A8 8 0 0 0 0 8V244A8 8 0 0 0 8 252H639A8 8 0 0 0 647 244V8A8 8 0 0 0 639 0Z"); }
    .dt { height: 28px; background: #e8fbf7; display: flex; align-items: center; justify-content: space-between; padding: 0 8px 0 7px; font-family: "Open Sans", sans-serif; }
    .db { display: flex; margin: 8px 0 0 6px; height: 168px; gap: 7px; }
    .list { width: 512px; height: 168px; border: 2px solid #666; border-width: 2px 0 0 2px; background: #f0f0f0; }
    .lh { display: flex; height: 18px; border-bottom: 1px solid #666; }
    .lh div { border-right: 2px solid #777; padding: 2px 0 0 5px; overflow: hidden; white-space: nowrap; flex: none; }
    .lr { height: 13.700px; background: #fff; border-bottom: 1px solid #e8e8e8; display: flex; align-items: center; }
    .lr > * { position: relative; top: 1px; }
    .lr.s { background: linear-gradient(90deg, #fff 14px, #0078d7 14px); color: #fff; }
    .cb { width: 10px; height: 9px; border: 2px solid #333; margin: 0 14px 0 0; flex: none; }
    .cb.x { border-color: #2020d0; background: linear-gradient(45deg, transparent 35%, #2020d0 36% 64%, transparent 65%), #9a9aff; }
    .ps { flex: none; width: 147px; }
    .hb { width: 344px; height: 2px; background: #555; margin: 5px 0 0 16px; }
    .rb { width: 97px; display: flex; flex-direction: column; }
    .btn { border: 1px solid #fff; border-right: 2px solid #666; border-bottom: 2px solid #666; display: grid; place-items: center; background: #f0f0f0; }
    .rb .btn { height: 22px; margin: 3px 0 0; flex: none; }
    .rb .btn + .btn { margin-top: 5px; }
    fieldset { border: 1px solid #888; margin: 6px 0 0; padding: 0 5px; height: 60px; min-width: 0; width: 96px; flex: none; }
    legend { padding: 0 2px; margin-left: 2px; line-height: 13px; }
    .ra { display: flex; align-items: center; height: 21px; gap: 6px; margin-top: -1px; }
    .ra i { width: 10px; height: 10px; border: 1.500px solid #777; border-right-color: #ccc; border-bottom-color: #ccc; border-radius: 50%; display: grid; place-items: center; }
    .ra i.c::after { content: ""; width: 4px; height: 4px; border-radius: 50%; background: #000; }
    .bb { display: flex; margin: 6px 0 0 8px; gap: 3px; }
    .bb .btn { width: 166px; height: 22px; }
    .msg { position: absolute; left: 563px; top: 229px; width: 130px; height: 144px; border-radius: 7px; background: #f4f4f4; opacity: .2; box-shadow: 0 4px 14px rgba(0,0,0,.5); font: 12px/14px "Open Sans", sans-serif; padding: 4px 8px; display: flex; flex-direction: column; }
    .msg .a { display: flex; justify-content: space-between; align-items: center; height: 22px; }
    .msg .b { display: flex; gap: 11px; align-items: center; height: 76px; padding-left: 12px; margin-top: 3px; }
    .msg .i { width: 29px; height: 29px; border-radius: 50%; background: #002c9c; color: #fff; display: grid; place-items: center; font: 700 22px "Liberation Serif", serif; }
    .msg .btn { width: 71px; height: 22px; margin: 8px 0 0 37px; background: #eee; color: #000; border-color: #ccc #222 #222 #ccc; }
  `;

  updated() {
    this.renderRoot.querySelectorAll<HTMLElement>("[data-w]").forEach((el) => {
      el.style.transform = "none";
      const vertical = el.parentElement!.classList.contains("vert");
      const r = el.getBoundingClientRect();
      const want = Number(el.dataset.w);
      const have = vertical ? r.height : r.width;
      if (have > 0) el.style.transform = vertical ? `scaleY(${want / have})` : `scaleX(${want / have})`;
    });
  }

  private more() {
    return html`<div class="more"><svg width="12" height="14" viewBox="0 0 12 14"><path d="M2 1H11" stroke="#fff" stroke-width="1.400"></path><path d="M2 7H11L6.500 12Z" fill="#444"></path><path d="M10.500 7L6.500 12.500M10.500 8V9" stroke="#fff" fill="none"></path></svg></div>`;
  }

  private bar(b: Bar) {
    let at = b.x + 6;
    return html`<div class="bar" style="width:${b.end - b.x}px"><div class="grip"></div>${b.items.map(([s, a, e, c]) => {
      const isText = e !== undefined;
      const wide = c === "on" ? 4 : 0;
      const half = c === "hot" || c === "sel" ? 21 : 16;
      const l = isText ? a - wide : a - half;
      const r = isText ? e! + wide : a + half;
      const gap = l - at;
      at = r;
      const body = s === "#input" ? html`<div class="input"><span>„11</span></div>` : isText ? fit(s, e! - a) : icon(s);
      return html`<div class="cell ${c ?? ""}" style="margin-left:${gap}px;width:${r - l}px">${body}</div>`;
    })}</div>${this.more()}`;
  }

  private eye() {
    return html`<svg width="16" height="10" viewBox="0 0 16 10"><path d="M1 5Q8-3 15 5Q8 12 1 5Z" fill="#fff" stroke="#000"></path><circle cx="8" cy="5" r="3.200" fill="#1a9a70"></circle><rect x="7" y="4" width="2" height="2"></rect></svg>`;
  }
  private magnet() {
    return html`<svg width="14" height="14" viewBox="0 0 14 14"><path d="M4.500 13V10Q-.5 2 7 2Q14.500 2 9.500 10V13" fill="none" stroke="#222" stroke-width="3.600"></path><path d="M4.500 10V9Q1 3 7 2.500Q13 3 9.500 9V10" fill="none" stroke="#ddd" stroke-width="1.800"></path><path d="M4.500 13V10M9.500 13V10" stroke="#f22" stroke-width="2"></path></svg>`;
  }

  private layers() {
    const tools: [string, number][] = [["lNew", 27], ["lDel", 71], ["|", 97], ["lDelB", 123], ["lProp", 167], ["|", 193], ["lTreeC", 219], ["lBox", 251], ["lTree", 272], ["|", 289], ["lOpen", 314]];
    let at = 3;
    const row = (name: string, w: number, n: string, plus: boolean) => html`<div class="lrow">
      <svg width="14" height="17" viewBox="0 0 14 17"><path d=${plus ? "M4.500 12V17M9 8.500H12" : "M4.500 0V8.500H12"} stroke="#999" stroke-dasharray="1 1" fill="none"></path>${plus ? svg`<rect x=".5" y="4.500" width="8" height="8" fill="#fff" stroke="#999"></rect><path d="M2 8.500H7M4.500 6V11" stroke="#000"></path>` : ""}</svg>
      ${fit(name, w)}<span style="width:${83 - w}px" class="sp"></span>${this.eye()}<span style="width:5px"></span>${this.magnet()}<span style="width:25px"></span>
      <svg width="18" height="14"><rect width="18" height="13" fill="#777"></rect><rect width="17" height="13" fill="#000"></rect></svg><span style="width:5px"></span>${fit(n, 6)}</div>`;
    return html`<div class="layers"><div class="pane">
      <div class="phead">${fit("Layers", 30)}<svg style="margin-left:auto" width="30" height="12" viewBox="0 0 30 12"><path d="M2 8H9M3.500 8V2.500H7.500V8M5.500 8V12" stroke="#333" fill="none"></path><path d="M18 2L25 10M25 2L18 10" stroke="#333" stroke-width="1.500"></path></svg></div>
      <div class="ptool">${tools.map(([n, c]) => {
        const h = n === "|" ? 1 : 16;
        const gap = c - h - at;
        at = c + h;
        return html`<div class="sp" style="margin-left:${gap}px">${n === "|" ? html`<div class="sepv"></div>` : icon(n)}</div>`;
      })}</div>
      <div class="lhead"><div style="width:100px">${fit("Name", 28)}</div>${["V.", "S.", "A.", "C."].map((s) => html`<div style="width:20px">${fit(s, 9)}</div>`)}<div style="width:75px">${fit("Elements", 46)}</div></div>
      ${row("BACKGROUND", 77, "0", true)}${row("BENCHMARK", 71, "1", false)}
    </div>
    <div class="ptabs"><div class="la">${fit("La...", 18)}</div>${run([["D...", 35, 52], ["Sy...", 62, 81], ["Al...", 89, 107], ["Se...", 116, 136], ["D...", 143, 159], ["Te...", 170, 189], ["Pa...", 197, 217], ["N...", 224, 240], ["Tr...", 251, 268], ["Fa...", 278, 298]], 27)}</div></div>`;
  }

  private dialog() {
    const rows = ["Model", "N°_DESSIN", "Visa700_PLAN", "Visa700_ISO", "Visa1200_PLAN", "Visa1200_ISO", "A3_Paysage", "Sheet 7", "", ""];
    const widths = [30, 56, 69, 60, 76, 66, 59, 37, 0, 0];
    return html`<div class="shadow"></div><div class="dlg">
      <div class="dt">${fit("Plotting", 41)}<svg width="12" height="12"><path d="M1.500 1.500L10.500 10.500M10.500 1.500L1.500 10.500" stroke="#000" stroke-width="1.200"></path></svg></div>
      <div class="db"><div class="list"><div class="lh"><div style="width:19px;padding-left:5px">${fit("P..", 12)}</div><div style="width:147px">${fit("Tab Name", 49)}</div><div style="width:175px">${fit("Page Style", 51)}</div><div style="width:39px">${fit("She...", 27)}</div><div style="width:97px">${fit("Sheet Name", 58)}</div><div style="width:33px;border:0">${fit("Sheet", 28)}</div></div>
        ${rows.map((r, i) => html`<div class="lr ${i === 7 ? "s" : ""}">${r ? html`<i class="cb ${i === 7 ? "x" : ""}"></i><span class="ps">${fit(r, widths[i])}</span>${i === 0 ? fit("One Page, Top Down, Zoom All", 148) : ""}` : ""}</div>`)}
        <div class="hb"></div></div>
        <div class="rb"><div class="btn">${fit("Move Up", 43)}</div><div class="btn">${fit("Move Down", 57)}</div><div class="btn">${fit("Select All", 44)}</div><div class="btn">${fit("Select None", 58)}</div>
          <fieldset><legend>${fit("Export PDF as", 66)}</legend><div class="ra"><i class="c"></i>${fit("One PDF", 42)}</div><div class="ra"><i></i>${fit("Separate PDFs", 69)}</div></fieldset></div></div>
      <div class="bb"><div class="btn">${fit("Export to PDF", 65)}</div><div class="btn">${fit("Start Printing", 59)}</div><div class="btn">${fit("Cancel", 33)}</div></div>
    </div>
    <div class="msg"><div class="a">${fit("AutoSPRINK 2023", 90)}<svg width="11" height="11"><path d="M1 1L10 10M10 1L1 10" stroke="#000" stroke-width="1.400"></path></svg></div><div class="b"><div class="i">i</div>${fit("Success!", 39)}</div><div class="btn">${fit("OK", 14)}</div></div>`;
  }

  private side() {
    const seq = (list: [string, number][], from: number) => {
      let at = from;
      return list.map(([n, c]) => {
        const h = n === "|" ? 1 : 16;
        const gap = c - h - at;
        at = c + h;
        return html`<div class="sp" style="margin-top:${gap}px">${n === "|" ? html`<div class="hl"></div>` : icon(n)}</div>`;
      });
    };
    const more = html`<div class="vmore"><svg width="14" height="12" viewBox="0 0 14 12"><path d="M1.500 1V11" stroke="#fff" stroke-width="2"></path><path d="M6 1V11L12 6Z" fill="#444"></path><path d="M6 11L12.500 6" stroke="#fff"></path></svg></div>`;
    return html`<div class="side">
      <div class="vbar" style="height:212px"><div class="vgrip"></div><div class="sp" style="margin-top:9px">${this.vtext("Import DWG", 65)}</div>${seq([["dwg", 289], ["pages", 332], ["blocks", 373]], 265)}</div>${more}
      <div class="vbar" style="height:280px"><div class="vgrip"></div>${seq([["armS", 449], ["sunS", 490], ["|", 515], ["vS", 539], ["aS", 583], ["|", 607], ["wandS", 632], ["nodesS", 676]], 423)}</div>${more}
      <div class="vbar" style="height:242px"><div class="vgrip"></div><div class="sp" style="margin-top:11px">${this.vtext("GLSL", 31)}</div><div class="ogl on" style="margin-top:2px">${this.vtext("OpenGL®", 55)}</div>${seq([["monL", 852], ["monR", 894], ["handprops", 936]], 830)}</div>${more}
    </div>`;
  }
  private vtext(s: string, h: number) {
    return html`<span class="fit vert" style="height:${h}px"><span class="fi" style="transform-origin:50% 0" data-w=${h}>${s}</span></span>`;
  }

  render() {
    const navs = ["M3 2V8M9 2L5 5L9 8Z", "M8 2L4 5L8 8Z", "M4 2L8 5L4 8Z", "M9 2V8M3 2L7 5L3 8Z"];
    let at = 398;
    return html`
      <div class="title">${icon("app", 16)}<div class="t">${fit("AutoSPRINK® 2023 Platinum - C:\\Users\\B.Chambers\\Desktop\\AutomationTesting\\SmokeTesting\\SPRINK Smoke Testing Files\\VEDIA-VIA-BAT-N_03.cad - [VEDIA-VIA-BAT-N_03]", 927)}</div>
        <svg class="wins" viewBox="0 0 124 23"><path d="M8 10.500H18" stroke="#000"></path><path d="M53.500 7.500H60.500V14.500H53.500ZM55.500 7V5.500H62.500V12.500H61" fill="none" stroke="#000"></path><path d="M99.500 5.500L109 15M109 5.500L99.500 15" stroke="#000" stroke-width="1.200"></path></svg></div>
      <div class="menu">${icon("doc", 15)}${run(MENU, 18)}<svg class="mdi" width="42" height="12" viewBox="0 0 42 12"><path d="M1 10.500H7" stroke="#aab" stroke-width="2"></path><path d="M15.500 4.500H22.500V10H15.500ZM17.500 4V2.500H24.500V8" fill="none" stroke="#aab" stroke-width="1.400"></path><path d="M32 2L39 11M39 2L32 11" stroke="#aab" stroke-width="2"></path></svg></div>
      ${BARS.map((r) => html`<div class="trow">${r.map((b) => this.bar(b))}</div>`)}
      <div class="mid"><div class="left"><div class="work">${this.layers()}
        <div class="docs"><div class="dtabs">${run(DOC_TABS, 330)}<div class="dact">${fit("VEDIA-VIA-BAT-N_03.cad", 128)}<svg width="8" height="8"><path d="M1 1L7 7M7 1L1 7" stroke="#444" stroke-width="1.500"></path></svg></div>
            <svg style="margin-left:110px" width="26" height="12" viewBox="0 0 26 12"><path d="M5 1V11L1 6ZM19 1V11L23 6Z" fill="none" stroke="#3c3c3c"></path></svg></div>
          <div class="dframe"><div class="dinner"><div class="crow"><div class="canvas">${drawing()}${this.dialog()}</div><div class="vs"><i></i></div></div><div class="hs"><i></i></div>
            <div class="sheets">${navs.map((d) => html`<div class="nav"><svg width="12" height="10" viewBox="0 0 12 10"><path d=${d} fill="#222" stroke="#222"></path></svg></div>`)}<span style="width:4px"></span>
              ${SHEET_TABS.map(([s, a, b], i) => {
                const end = i < SHEET_TABS.length - 1 ? SHEET_TABS[i + 1][1] - 7 : 927;
                const w = end - (a - 7);
                const gap = a - 7 - at;
                at = end;
                return html`<div class="stab" style="margin-left:${gap}px;width:${w}px">${fit(s, b - a)}<svg class="cut" viewBox="0 0 9 17"><path d="M9 8V17H1Z" fill="#666"></path><path d="M9 3L0 17" stroke="#fff"></path></svg></div>`;
              })}<div class="stab sact" style="width:64px">${fit("*Sheet 7", 43)}</div></div></div></div></div>
      </div>
      <div class="status">${run([["0 selected", 1631, 1681], ["Elev1: 0 \"", 1694, 1739], ["ø 2 (2.0670)", 1751, 1809], ["# Off", 1815, 1842], ["Inch", 1848, 1870]], 0)}</div></div>
      ${this.side()}</div>
      <div class="brow">${BOTTOM.map((b) => this.bar(b))}</div>`;
  }
}
